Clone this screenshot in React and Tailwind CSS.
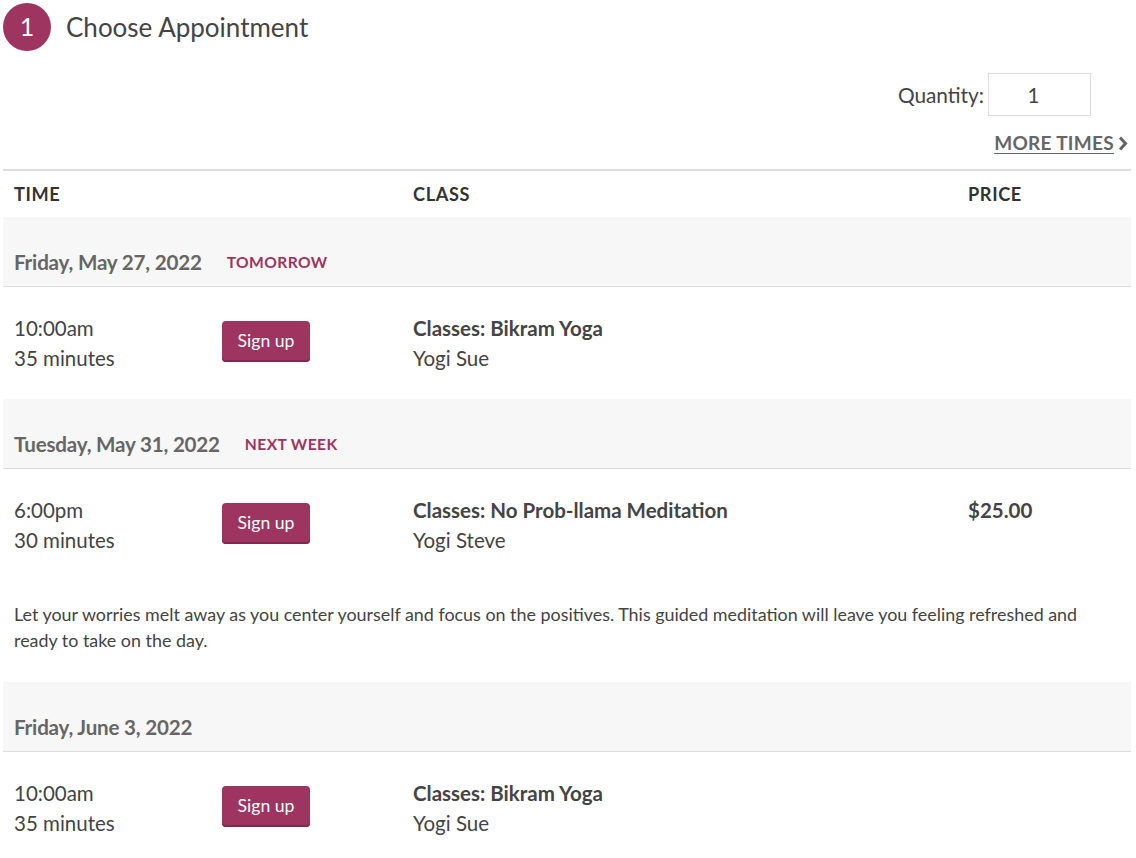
import React from 'react'

const slots = [
  {
    date: 'Friday, May 27, 2022',
    tag: 'Tomorrow',
    time: '10:00am',
    length: '35 minutes',
    title: 'Classes: Bikram Yoga',
    teacher: 'Yogi Sue',
  },
  {
    date: 'Tuesday, May 31, 2022',
    tag: 'Next week',
    time: '6:00pm',
    length: '30 minutes',
    title: 'Classes: No Prob-llama Meditation',
    teacher: 'Yogi Steve',
    price: '$25.00',
    note: 'Let your worries melt away as you center yourself and focus on the positives. This guided meditation will leave you feeling refreshed and ready to take on the day.',
  },
  {
    date: 'Friday, June 3, 2022',
    time: '10:00am',
    length: '35 minutes',
    title: 'Classes: Bikram Yoga',
    teacher: 'Yogi Sue',
  },
]

const Slot = ({ slot }) => (
  <div>
    <div className="h-[70px] bg-[#f7f7f7] border-b border-[#dddddd] px-[11px] flex items-end pb-[9px]">
      <span className="text-[20.6px] leading-[30px] font-bold text-[#666666] tracking-[-0.2px]">{slot.date}</span>
      {slot.tag && (
        <span className="ml-[25px] text-[15.6px] leading-[30px] font-bold uppercase tracking-[0.4px] text-[#9d3560] pt-[2px]">
          {slot.tag}
        </span>
      )}
    </div>
    <div className="px-[11px] pt-[26px] pb-[26px] grid grid-cols-[399px_555px_1fr] text-[20.5px] leading-[30px]">
      <div className="flex">
        <div className="w-[208px]">
          <div>{slot.time}</div>
          <div>{slot.length}</div>
        </div>
        <div className="pt-[8px]">
          <button className="w-[88px] h-[41px] rounded-[4px] bg-[#9d3560] text-white text-[17.6px] leading-[39px] pb-[2px] shadow-[inset_0_-2px_0_#7d2a4c]">
            Sign up
          </button>
        </div>
      </div>
      <div>
        <div className="font-bold">{slot.title}</div>
        <div>{slot.teacher}</div>
      </div>
      <div className="font-bold">{slot.price}</div>
    </div>
    {slot.note && (
      <p className="px-[11px] pt-[20px] pb-[29px] text-[17.9px] leading-[26px]">{slot.note}</p>
    )}
  </div>
)

export default function App() {
  return (
    <div className="min-h-screen bg-white pl-[3px] pr-[5px] text-[#444444] font-['Lato',_'Open_Sans',_sans-serif]">
      <div className="flex items-center h-[54px] pt-[3px] pb-[3px]">
        <div className="w-[48px] h-[48px] rounded-full bg-[#9d3560] text-white flex items-center justify-center text-[25px]">
          1
        </div>
        <h1 className="ml-[15px] text-[26px] text-[#444444]">Choose Appointment</h1>
      </div>

      <div className="flex justify-end items-center mt-[19px] pr-[40px]">
        <label className="text-[20.8px] mr-[4px]">Quantity:</label>
        <input
          defaultValue="1"
          className="w-[103px] h-[43px] border border-[#dddddd] text-center text-[20.5px] pr-[12px] outline-none"
        />
      </div>

      <div className="flex justify-end mt-[15px] pr-[2px]">
        <a href="#" className="flex items-center text-[19px] leading-[24px] font-bold text-[#666666] underline underline-offset-[3px] tracking-[0.3px]">
          MORE TIMES
          <svg className="w-[12px] h-[15px] ml-[3px]" viewBox="0 0 12 15" fill="none" stroke="#666666" strokeWidth="3">
            <path d="M3 1.5l5.5 6L3 13.5" />
          </svg>
        </a>
      </div>

      <div className="mt-[14px] border-t-2 border-[#dddddd]">
        <div className="h-[46px] px-[11px] pt-[2px] grid grid-cols-[399px_555px_1fr] items-center text-[18.2px] font-bold uppercase tracking-[0.6px] text-[#333333]">
          <div>Time</div>
          <div>Class</div>
          <div>Price</div>
        </div>
        {slots.map((s, i) => (
          <Slot key={i} slot={s} />
        ))}
      </div>
    </div>
  )
}
